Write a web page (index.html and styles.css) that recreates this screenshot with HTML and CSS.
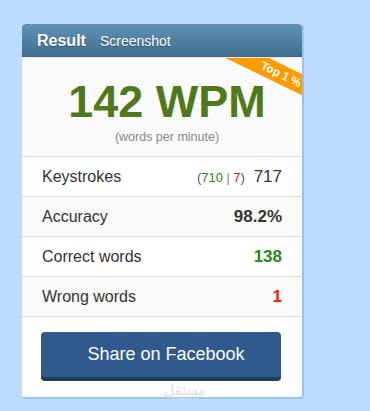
FILE: index.html
```
<!DOCTYPE html>
<html lang="en">
<head>
  <meta charset="UTF-8" />
  <title>Typing Test Result</title>
  <link rel="stylesheet" href="styles.css">
</head>
<body>
  <div class="result-box">
    <div class="result-head">
      <span class="head-title">Result</span>
      <span class="head-tab">Screenshot</span>
    </div>
    <div class="wpm-block">
      <div class="ribbon">Top 1 %</div>
      <div class="wpm">142 WPM</div>
      <div class="wpm-sub">(words per minute)</div>
    </div>
    <div class="stat-row">
      <span class="stat-label">Keystrokes</span>
      <span class="stat-value">
        <small class="key-detail">(<span class="green">710</span> <span class="pipe">|</span> <span class="red">7</span>)</small>
        717
      </span>
    </div>
    <div class="stat-row alt">
      <span class="stat-label">Accuracy</span>
      <span class="stat-value bold">98.2%</span>
    </div>
    <div class="stat-row">
      <span class="stat-label">Correct words</span>
      <span class="stat-value bold green">138</span>
    </div>
    <div class="stat-row alt">
      <span class="stat-label">Wrong words</span>
      <span class="stat-value bold red">1</span>
    </div>
    <div class="share">
      <button type="button" class="share-button">Share on Facebook</button>
      <div class="watermark">مستقل<span>mostaql.com</span></div>
    </div>
  </div>
</body>
</html>
```

FILE: styles.css
```
body {
  margin: 0;
  background: #bbdcfd;
  font-family: Arial, "Liberation Sans", sans-serif;
  padding: 24px 0 0 22px;
}
.result-box {
  width: 280px;
  background: #fff;
  border-radius: 4px;
  border-right: 2px solid #9cc4ea;
  border-bottom: 2px solid #9cc4ea;
}
.result-head {
  height: 33px;
  background: linear-gradient(#6192b5, #3f6d8d);
  border-radius: 4px 4px 0 0;
  display: flex;
  align-items: center;
  padding: 0 0 0 15px;
  color: #fff;
  text-shadow: 0 1px 1px rgba(0, 0, 0, 0.35);
}
.head-title {
  font-weight: bold;
  font-size: 16px;
  margin-right: 14px;
}
.head-tab {
  font-size: 14px;
}
.wpm-block {
  position: relative;
  background: #fafafa;
  text-align: center;
  height: 98px;
  padding-left: 10px;
  border-top: 1px solid #e6e6e6;
  border-bottom: 1px solid #ddd;
  overflow: hidden;
}
.ribbon {
  position: absolute;
  top: 7px;
  left: 197px;
  width: 124px;
  height: 19px;
  background: #fd9c00;
  color: #fff;
  font-size: 11.5px;
  font-weight: bold;
  line-height: 19px;
  transform: rotate(26deg);
  text-align: center;
}
.wpm {
  font-size: 45px;
  font-weight: bold;
  color: #4f7a1c;
  line-height: 50px;
  padding-top: 19px;
}
.wpm-sub {
  font-size: 12.5px;
  color: #888;
  margin-top: 3px;
}
.stat-row {
  display: flex;
  justify-content: space-between;
  align-items: center;
  height: 39px;
  padding: 0 20px;
  border-bottom: 1px solid #ddd;
  font-size: 16px;
  color: #333;
  background: #fff;
}
.stat-row.alt {
  background: #f9f9f9;
}
.stat-value {
  font-size: 17px;
}
.bold {
  font-weight: bold;
}
.green {
  color: #2a8616;
}
.red {
  color: #ef1a0c;
}
.key-detail {
  font-size: 13px;
  color: #2a5f7d;
  margin-right: 4px;
}
.key-detail .pipe {
  color: #777;
  font-size: 12px;
}
.share {
  position: relative;
  padding: 15px 21px 0 19px;
  height: 65px;
}
.share-button {
  display: block;
  width: 240px;
  height: 49px;
  background: #30598e;
  border: none;
  border-bottom: 4px solid #1f3d5c;
  border-radius: 4px;
  color: #fff;
  font-family: Arial, "Liberation Sans", sans-serif;
  font-size: 18px;
  padding: 0 0 0 10px;
}
.watermark {
  position: absolute;
  left: 0;
  right: 0;
  top: 67px;
  padding-left: 46px;
  text-align: center;
  font-size: 14px;
  font-weight: bold;
  color: #e6e6e6;
  line-height: 12px;
}
.watermark span {
  display: block;
  font-size: 5px;
  line-height: 6px;
  font-weight: normal;
  color: #d6e4f2;
}
```
